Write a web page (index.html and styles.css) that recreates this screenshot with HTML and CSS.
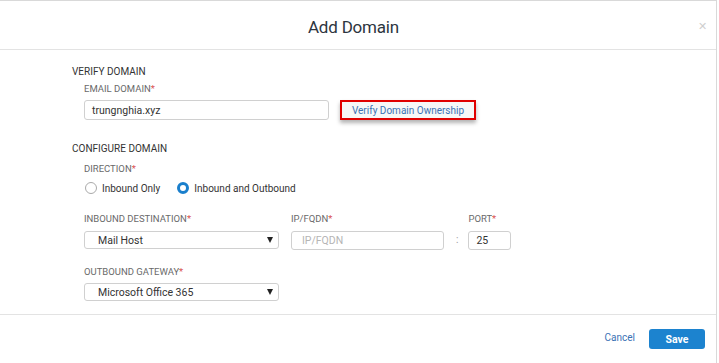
FILE: index.html
```html
<!DOCTYPE html>
<html>
<head>
<meta charset="utf-8">
<link rel="stylesheet" href="styles.css">
</head>
<body>
<div class="modal">
  <div class="header">
    <div class="title">Add Domain</div>
    <div class="close">&#x2715;</div>
  </div>
  <div class="content">
    <div class="section-title">VERIFY DOMAIN</div>
    <div class="group">
      <div class="label l-email">EMAIL DOMAIN<span class="req">*</span></div>
      <div class="row-email">
        <div class="input input-email">trungnghia.xyz</div>
        <div class="verify-btn">Verify Domain Ownership</div>
      </div>
    </div>
    <div class="section-title s-config">CONFIGURE DOMAIN</div>
    <div class="group">
      <div class="label l-dir">DIRECTION<span class="req">*</span></div>
      <div class="radios">
        <div class="radio"><span class="dot"></span>Inbound Only</div>
        <div class="radio checked"><span class="dot"></span>Inbound and Outbound</div>
      </div>
      <div class="fields">
        <div class="field f-dest">
          <div class="label">INBOUND DESTINATION<span class="req">*</span></div>
          <div class="select">Mail Host<span class="arrow"></span></div>
        </div>
        <div class="field f-ip">
          <div class="label">IP/FQDN<span class="req">*</span></div>
          <div class="input input-ip placeholder">IP/FQDN</div>
        </div>
        <div class="colon">:</div>
        <div class="field f-port">
          <div class="label">PORT<span class="req">*</span></div>
          <div class="input input-port">25</div>
        </div>
      </div>
      <div class="field f-out">
        <div class="label">OUTBOUND GATEWAY<span class="req">*</span></div>
        <div class="select">Microsoft Office 365<span class="arrow"></span></div>
      </div>
    </div>
  </div>
  <div class="footer">
    <div class="cancel">Cancel</div>
    <div class="save">Save</div>
  </div>
</div>
</body>
</html>
```

FILE: styles.css
```css
html, body {
  margin: 0;
  padding: 0;
  background: #fff;
}
body {
  font-family: Roboto, "Liberation Sans", sans-serif;
  font-size: 10px;
  color: #333;
}
.modal {
  width: 716px;
  height: 362px;
  border-top: 1px solid #d9d9d9;
  border-right: 1px solid #d9d9d9;
  display: flex;
  flex-direction: column;
}
.header {
  height: 48px;
  border-bottom: 1px solid #e3e3e3;
  display: flex;
  align-items: center;
  justify-content: center;
  position: relative;
}
.title {
  font-size: 17px;
  color: #2d3540;
  margin-left: -9px;
  margin-top: 4px;
  letter-spacing: -0.2px;
}
.close {
  position: absolute;
  right: 9px;
  top: 19px;
  font-size: 11px;
  color: #cfcfcf;
}
.content {
  flex: 1;
  padding: 15px 0 0 72px;
  display: flex;
  flex-direction: column;
}
.section-title {
  font-size: 10px;
  line-height: 13px;
  color: #333;
}
.s-config {
  margin-top: 22px;
}
.group {
  padding-left: 12px;
  display: flex;
  flex-direction: column;
}
.label {
  font-size: 9.5px;
  line-height: 12px;
  color: #6a6a6a;
}
.req {
  color: #d9534f;
}
.l-email {
  margin-top: 5px;
}
.row-email {
  display: flex;
  align-items: center;
  margin-top: 5px;
}
.input {
  box-sizing: border-box;
  border: 1px solid #d0d0d0;
  border-radius: 3px;
  font-size: 10.5px;
  color: #333;
  display: flex;
  align-items: center;
  background: #fff;
}
.input-email {
  width: 245px;
  height: 20px;
  padding-left: 7px;
}
.verify-btn {
  margin-left: 11px;
  box-sizing: border-box;
  width: 136px;
  height: 20px;
  border: 2px solid #e00000;
  background: #f7f7f7;
  box-shadow: 0 3px 4px rgba(0,0,0,0.3);
  color: #3a72b5;
  font-size: 10px;
  display: flex;
  align-items: center;
  justify-content: center;
}
.l-dir {
  margin-top: 8px;
}
.radios {
  display: flex;
  align-items: center;
  margin-top: 6px;
  height: 14px;
  font-size: 10px;
  color: #333;
}
.radio {
  display: flex;
  align-items: center;
}
.radio + .radio {
  margin-left: 16px;
}
.dot {
  box-sizing: border-box;
  width: 12px;
  height: 12px;
  border-radius: 50%;
  border: 1px solid #aaa;
  margin: 0 5px 0 1px;
  background: #fff;
}
.checked .dot {
  border: 3.5px solid #1a7fcc;
}
.fields {
  display: flex;
  margin-top: 18px;
}
.field {
  display: flex;
  flex-direction: column;
}
.field .label {
  margin-bottom: 6px;
}
.select {
  box-sizing: border-box;
  width: 195px;
  height: 18px;
  border: 1px solid #d0d0d0;
  border-radius: 3px;
  padding-left: 13px;
  font-size: 10.5px;
  color: #333;
  display: flex;
  align-items: center;
  position: relative;
}
.arrow {
  position: absolute;
  right: 5px;
  top: 5px;
  width: 0;
  height: 0;
  border-left: 3.5px solid transparent;
  border-right: 3.5px solid transparent;
  border-top: 6px solid #222;
}
.f-ip {
  margin-left: 12px;
}
.input-ip {
  width: 153px;
  height: 19px;
  padding-left: 10px;
}
.placeholder {
  color: #b5b5b5;
}
.colon {
  margin: 17px 10px 0 12px;
  color: #999;
  font-size: 10px;
  line-height: 19px;
  align-self: flex-start;
}
.input-port {
  width: 43px;
  height: 19px;
  padding-left: 7px;
}
.f-out {
  margin-top: 16px;
}
.f-out .label {
  margin-bottom: 5px;
}
.footer {
  height: 48px;
  border-top: 1px solid #e3e3e3;
  display: flex;
  justify-content: flex-end;
  align-items: flex-start;
  padding-right: 11px;
}
.cancel {
  margin-top: 17px;
  font-size: 10px;
  color: #3a72b5;
  margin-right: 14px;
}
.save {
  margin-top: 14px;
  width: 56px;
  height: 20px;
  border-radius: 3px;
  background: #1c83cf;
  color: #fff;
  font-size: 10.5px;
  font-weight: bold;
  display: flex;
  align-items: center;
  justify-content: center;
}
```
